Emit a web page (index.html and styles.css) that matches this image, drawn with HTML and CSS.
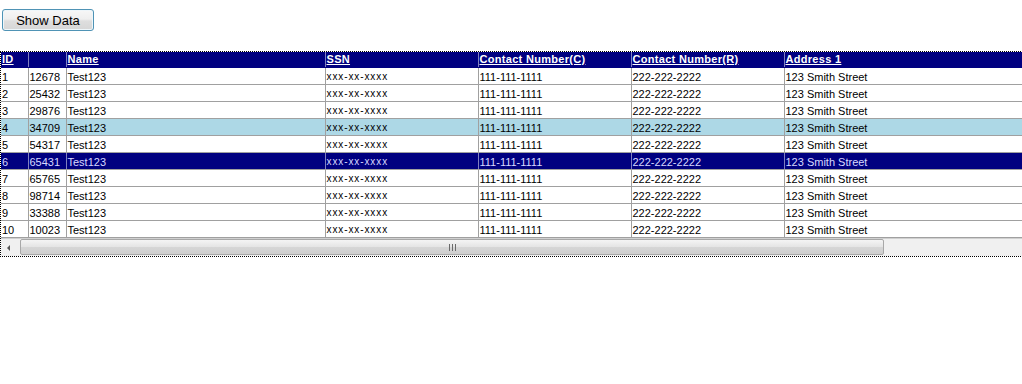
FILE: index.html
```html
<!DOCTYPE html>
<html>
<head>
<meta charset="utf-8">
<link rel="stylesheet" href="styles.css">
</head>
<body>
<div class="page">
  <button class="btn">Show Data</button>
  <div class="grid">
    <div class="viewport">
      <table class="data">
        <colgroup>
          <col class="c-id"><col class="c-num"><col class="c-name"><col class="c-ssn"><col class="c-phone"><col class="c-phone"><col class="c-addr">
        </colgroup>
        <thead>
          <tr><th><a>ID</a></th><th></th><th><a>Name</a></th><th><a>SSN</a></th><th><a>Contact Number(C)</a></th><th><a>Contact Number(R)</a></th><th><a>Address 1</a></th></tr>
        </thead>
        <tbody>
          <tr><td>1</td><td>12678</td><td>Test123</td><td class="ssn">xxx-xx-xxxx</td><td>111-111-1111</td><td>222-222-2222</td><td>123 Smith Street</td></tr>
          <tr><td>2</td><td>25432</td><td>Test123</td><td class="ssn">xxx-xx-xxxx</td><td>111-111-1111</td><td>222-222-2222</td><td>123 Smith Street</td></tr>
          <tr><td>3</td><td>29876</td><td>Test123</td><td class="ssn">xxx-xx-xxxx</td><td>111-111-1111</td><td>222-222-2222</td><td>123 Smith Street</td></tr>
          <tr class="hover"><td>4</td><td>34709</td><td>Test123</td><td class="ssn">xxx-xx-xxxx</td><td>111-111-1111</td><td>222-222-2222</td><td>123 Smith Street</td></tr>
          <tr><td>5</td><td>54317</td><td>Test123</td><td class="ssn">xxx-xx-xxxx</td><td>111-111-1111</td><td>222-222-2222</td><td>123 Smith Street</td></tr>
          <tr class="selected"><td>6</td><td>65431</td><td>Test123</td><td class="ssn">xxx-xx-xxxx</td><td>111-111-1111</td><td>222-222-2222</td><td>123 Smith Street</td></tr>
          <tr><td>7</td><td>65765</td><td>Test123</td><td class="ssn">xxx-xx-xxxx</td><td>111-111-1111</td><td>222-222-2222</td><td>123 Smith Street</td></tr>
          <tr><td>8</td><td>98714</td><td>Test123</td><td class="ssn">xxx-xx-xxxx</td><td>111-111-1111</td><td>222-222-2222</td><td>123 Smith Street</td></tr>
          <tr><td>9</td><td>33388</td><td>Test123</td><td class="ssn">xxx-xx-xxxx</td><td>111-111-1111</td><td>222-222-2222</td><td>123 Smith Street</td></tr>
          <tr><td>10</td><td>10023</td><td>Test123</td><td class="ssn">xxx-xx-xxxx</td><td>111-111-1111</td><td>222-222-2222</td><td>123 Smith Street</td></tr>
        </tbody>
      </table>
    </div>
    <div class="hscroll">
      <div class="arrow"><svg width="17" height="16" viewBox="0 0 17 16"><path d="M9 5 L6 8 L9 11 Z" fill="#555"/></svg></div>
      <div class="thumb"><span class="grip"></span></div>
      <div class="track"></div>
    </div>
  </div>
</div>
</body>
</html>
```

FILE: styles.css
```css
html, body {
  margin: 0;
  padding: 0;
  background: #fff;
  overflow: hidden;
}
.page {
  width: 1022px;
  height: 384px;
  overflow: hidden;
  font-family: "Liberation Sans", Arial, sans-serif;
}
.btn {
  display: block;
  margin: 9px 0 0 2px;
  width: 92px;
  height: 22px;
  padding: 0;
  font-family: "Liberation Sans", Arial, sans-serif;
  font-size: 13px;
  color: #000;
  border: 1px solid #4f93b5;
  border-radius: 3px;
  background: linear-gradient(#f7f7f7 0%, #efefef 45%, #dedede 55%, #d6d6d6 100%);
  box-shadow: inset 0 0 0 1px #eef6fa;
}
.grid {
  margin-top: 20px;
  width: 1060px;
  border: 1px dotted #000;
  border-right: none;
}
.viewport {
  overflow: hidden;
}
.data {
  border-collapse: collapse;
  table-layout: fixed;
  width: 1100px;
  font-size: 11px;
}
.c-id { width: 27px; }
.c-num { width: 38px; }
.c-name { width: 259px; }
.c-ssn { width: 153px; }
.c-phone { width: 153px; }
.c-addr { width: 317px; }
.data th {
  background: #000080;
  color: #fff;
  font-weight: bold;
  text-align: left;
  height: 15px;
  padding: 0 1px;
  border-left: 1px solid #8080c0;
  border-bottom: 1px solid #000080;
  white-space: nowrap;
  line-height: 15px;
  letter-spacing: 0.3px;
}
.data th:first-child { border-left: none; }
.data th a {
  text-decoration: underline;
  color: #fff;
}
.data td {
  height: 14px;
  padding: 2px 1px 0;
  border-left: 1px solid #a0a0a0;
  border-bottom: 1px solid #a0a0a0;
  white-space: nowrap;
  line-height: 14px;
  color: #000;
}
.data td:first-child { border-left: none; }
.data td.ssn { font-size: 10px; letter-spacing: 0.9px; }
.data tr.hover td { background: #add8e6; }
.data tr.selected td {
  background: #000080;
  color: #d8d8ff;
  border-left-color: #8080c0;
}
.hscroll {
  display: flex;
  height: 17px;
  border-top: 1px solid #d0d0d0;
  background: #f0f0f0;
}
.arrow {
  width: 17px;
  height: 17px;
  flex: none;
  display: flex;
  align-items: center;
  justify-content: center;
}
.thumb {
  width: 862px;
  flex: none;
  margin: 0 0 1px 2px;
  border: 1px solid #a8a8a8;
  border-radius: 2px;
  background: linear-gradient(#f4f4f4, #e4e4e4 50%, #d6d6d6 51%, #cfcfcf);
  display: flex;
  align-items: center;
  justify-content: center;
}
.grip {
  width: 7px;
  height: 7px;
  background: repeating-linear-gradient(90deg, #6a6a6a 0 1px, transparent 1px 3px);
}
.track { flex: 1; }
```
